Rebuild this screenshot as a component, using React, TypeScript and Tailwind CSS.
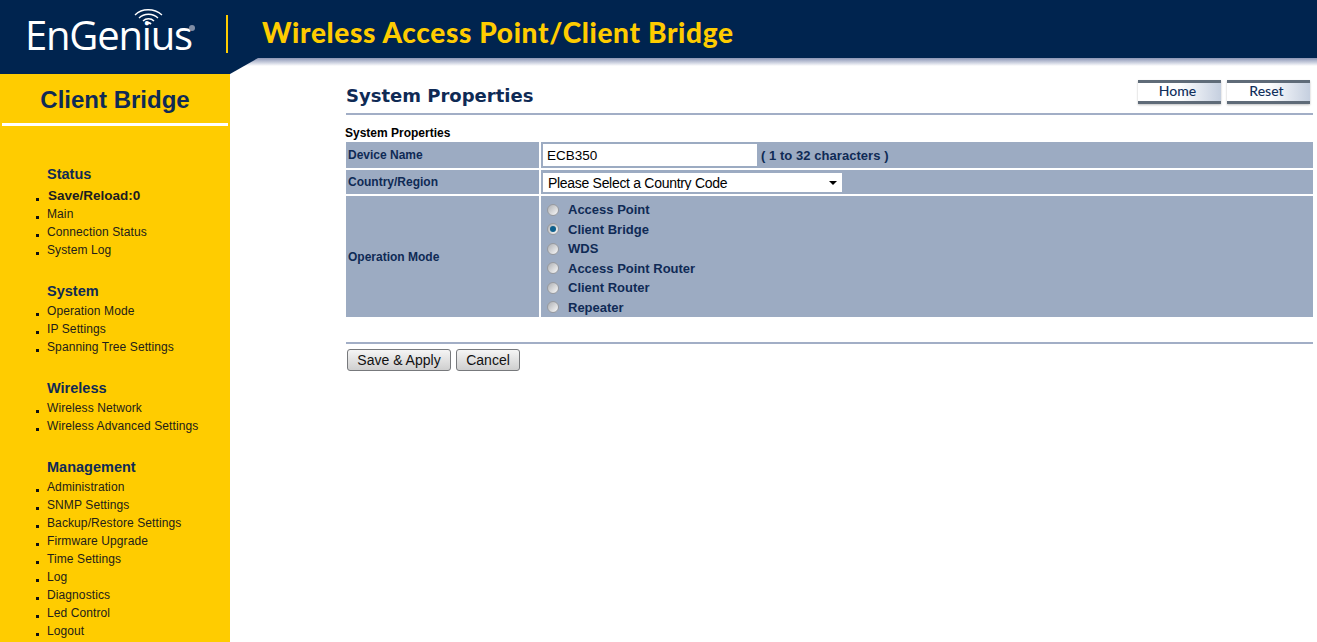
// EnGenius access point admin page
const sections = [
  { title: 'Status', cls: 'mt-[38px]', items: ['Main', 'Connection Status', 'System Log'], extra: 'Save/Reload:0' },
  { title: 'System', cls: 'mt-[22px]', items: ['Operation Mode', 'IP Settings', 'Spanning Tree Settings'] },
  { title: 'Wireless', cls: 'mt-[22px]', items: ['Wireless Network', 'Wireless Advanced Settings'] },
  {
    title: 'Management',
    cls: 'mt-[22px]',
    items: ['Administration', 'SNMP Settings', 'Backup/Restore Settings', 'Firmware Upgrade', 'Time Settings', 'Log', 'Diagnostics', 'Led Control', 'Logout'],
  },
];

const modes = ['Access Point', 'Client Bridge', 'WDS', 'Access Point Router', 'Client Router', 'Repeater'];

function Logo() {
  return (
    <div className="relative w-[198px] h-[58px] ml-[28px] shrink-0">
      <svg className="absolute left-[105px] top-[7px]" width="32" height="20" viewBox="0 0 32 20" fill="none" stroke="#ffffff">
        <path d="M2 8C9 1 21 1 29 8" strokeWidth="1.3" />
        <path d="M6 11C11 6 20 6 25 11" strokeWidth="1.3" />
        <path d="M10 14C13 11 18 11 21 14" strokeWidth="1.5" />
        <path d="M13 17C14.500 15.500 16.500 15.500 18 17" strokeWidth="1.8" />
      </svg>
      <span className="absolute left-[-3px] top-[12px] text-[40px] leading-[46px] text-white tracking-[-1.2px] font-['Open_Sans',sans-serif] font-normal">
        EnGenius
      </span>
      <span className="absolute left-[161px] top-[25px] w-[6px] h-[6px] rounded-full bg-[#7f8da5]" />
    </div>
  );
}

function NavSection({ title, cls, items, extra }: { title: string; cls: string; items: string[]; extra?: string }) {
  return (
    <div className={cls}>
      <div className="pl-[47px] h-[20px] leading-[20px] text-[14.5px] font-bold text-[#0f2a55]">{title}</div>
      {extra && (
        <div className="flex items-center h-[18px] mt-[3px] pl-[36px] text-[13.5px] font-bold text-[#1c1c22]">
          <span className="w-[3px] h-[3px] bg-[#111] mr-[9px] mt-[6px]" />
          {extra}
        </div>
      )}
      <ul className={extra ? '' : 'pt-[1px]'}>
        {items.map((item) => (
          <li key={item} className="flex items-center h-[18px] pl-[36px] text-[12px] tracking-[0.1px] text-[#22201a]">
            <span className="w-[3px] h-[3px] bg-[#111] mr-[8px] mt-[6px]" />
            {item}
          </li>
        ))}
      </ul>
    </div>
  );
}

function ImgButton({ label }: { label: string }) {
  return (
    <button className="w-[83px] h-[24px] pr-[4px] border-t-[3px] border-b-[3px] border-[#5f6b78] bg-gradient-to-r from-white via-white to-[#c5cfdf] text-[14px] leading-[16px] pb-[3px] text-[#12305c] font-['Lato',sans-serif] font-medium shadow-[0_1px_2px_rgba(0,0,0,0.25)]">
      {label}
    </button>
  );
}

function Radio({ checked }: { checked: boolean }) {
  return (
    <span className="w-[12px] h-[12px] rounded-full border border-[#979a9f] bg-gradient-to-br from-[#aeb0b4] to-[#fafafa] flex items-center justify-center">
      {checked && <span className="w-[6px] h-[6px] rounded-full bg-[#0d5f8c]" />}
    </span>
  );
}

export default function App() {
  return (
    <div className="w-[1317px] h-[642px] overflow-hidden bg-white flex flex-col font-['Liberation_Sans',Arial,sans-serif]">
      <header className="h-[58px] shrink-0 bg-[#00244f] flex items-start">
        <Logo />
        <div className="w-[2px] h-[38px] bg-[#ffcc00] mt-[15px]" />
        <h1 className="ml-[34px] mt-[15px] text-[28px] leading-[34px] font-black tracking-[0.65px] text-[#ffcc00] font-['Lato',sans-serif]">
          Wireless Access Point/Client Bridge
        </h1>
      </header>

      <div className="relative flex flex-1 min-h-0">
        <svg className="absolute left-[230px] top-0" width="28" height="16" viewBox="0 0 28 16">
          <path d="M0 0H28L0 16Z" fill="#00244f" />
        </svg>

        <aside className="w-[230px] shrink-0">
          <div className="h-[16px] bg-[#00244f]" />
          <div className="h-[568px] bg-[#ffcc00] overflow-hidden">
            <div className="h-[49px] pt-[11px] text-center text-[24px] leading-[30px] font-bold text-[#0f2a55]">Client Bridge</div>
            <div className="h-[3px] mx-[2px] bg-white" />
            {sections.map((s) => (
              <NavSection key={s.title} {...s} />
            ))}
          </div>
        </aside>

        <main className="flex-1 flex flex-col">
          <div className="h-[8px] shrink-0 bg-gradient-to-b from-[#8b95b5] to-white" />
          <div className="pl-[116px] pr-[4px] pt-[14px]">
            <div className="flex items-start justify-between h-[33px] border-b-2 border-[#a2aec6] box-content">
              <h2 className="mt-[5px] text-[18px] leading-[22px] font-bold text-[#0f2a55] font-['DejaVu_Sans',sans-serif]">System Properties</h2>
              <div className="flex gap-[6px] mr-[3px]">
                <ImgButton label="Home" />
                <ImgButton label="Reset" />
              </div>
            </div>

            <div className="mt-[10px] h-[16px] leading-[16px] text-[12px] font-bold text-black -ml-[1px]">System Properties</div>

            <div className="mt-[1px] grid grid-cols-[193px_1fr] gap-[2px] text-[12px] font-bold text-[#0f2a55]">
              <div className="bg-[#9cabc2] h-[26px] flex items-center pl-[2px]">Device Name</div>
              <div className="bg-[#9cabc2] h-[26px] flex items-center pl-[2px]">
                <input
                  defaultValue="ECB350"
                  className="w-[214px] h-[22px] bg-white px-[4px] text-[13.5px] font-normal text-black outline-none"
                />
                <span className="ml-[4px] mt-[1px] text-[13px] tracking-[0.05px]">( 1 to 32 characters )</span>
              </div>

              <div className="bg-[#9cabc2] h-[24px] flex items-center pl-[2px]">Country/Region</div>
              <div className="bg-[#9cabc2] h-[24px] flex items-center pl-[2px]">
                <div className="relative w-[299px] h-[19px]">
                  <select className="w-full h-full appearance-none bg-white pl-[5px] pb-[2px] text-[14px] tracking-[-0.3px] font-normal text-black outline-none">
                    <option>Please Select a Country Code</option>
                  </select>
                  <span className="absolute right-[5px] top-[8px] border-x-[4px] border-t-[4px] border-x-transparent border-t-black" />
                </div>
              </div>

              <div className="bg-[#9cabc2] h-[121px] flex items-center pl-[2px]">Operation Mode</div>
              <div className="bg-[#9cabc2] h-[121px] pl-[6px] pt-[4px] flex flex-col">
                {modes.map((mode) => (
                  <label key={mode} className="flex items-center h-[19.5px] text-[13px]">
                    <Radio checked={mode === 'Client Bridge'} />
                    <span className="ml-[9px]">{mode}</span>
                  </label>
                ))}
              </div>
            </div>

            <div className="mt-[25px] h-[2px] bg-[#a2aec6]" />

            <div className="mt-[5px] ml-[1px] flex gap-[5px]">
              <button className="w-[104px] h-[22px] rounded-[3px] border border-[#77797c] bg-gradient-to-b from-[#f5f5f5] to-[#cfcfcf] text-[14px] text-[#111]">Save &amp; Apply</button>
              <button className="w-[64px] h-[22px] rounded-[3px] border border-[#77797c] bg-gradient-to-b from-[#f5f5f5] to-[#cfcfcf] text-[14px] text-[#111]">Cancel</button>
            </div>
          </div>
        </main>
      </div>
    </div>
  );
}
